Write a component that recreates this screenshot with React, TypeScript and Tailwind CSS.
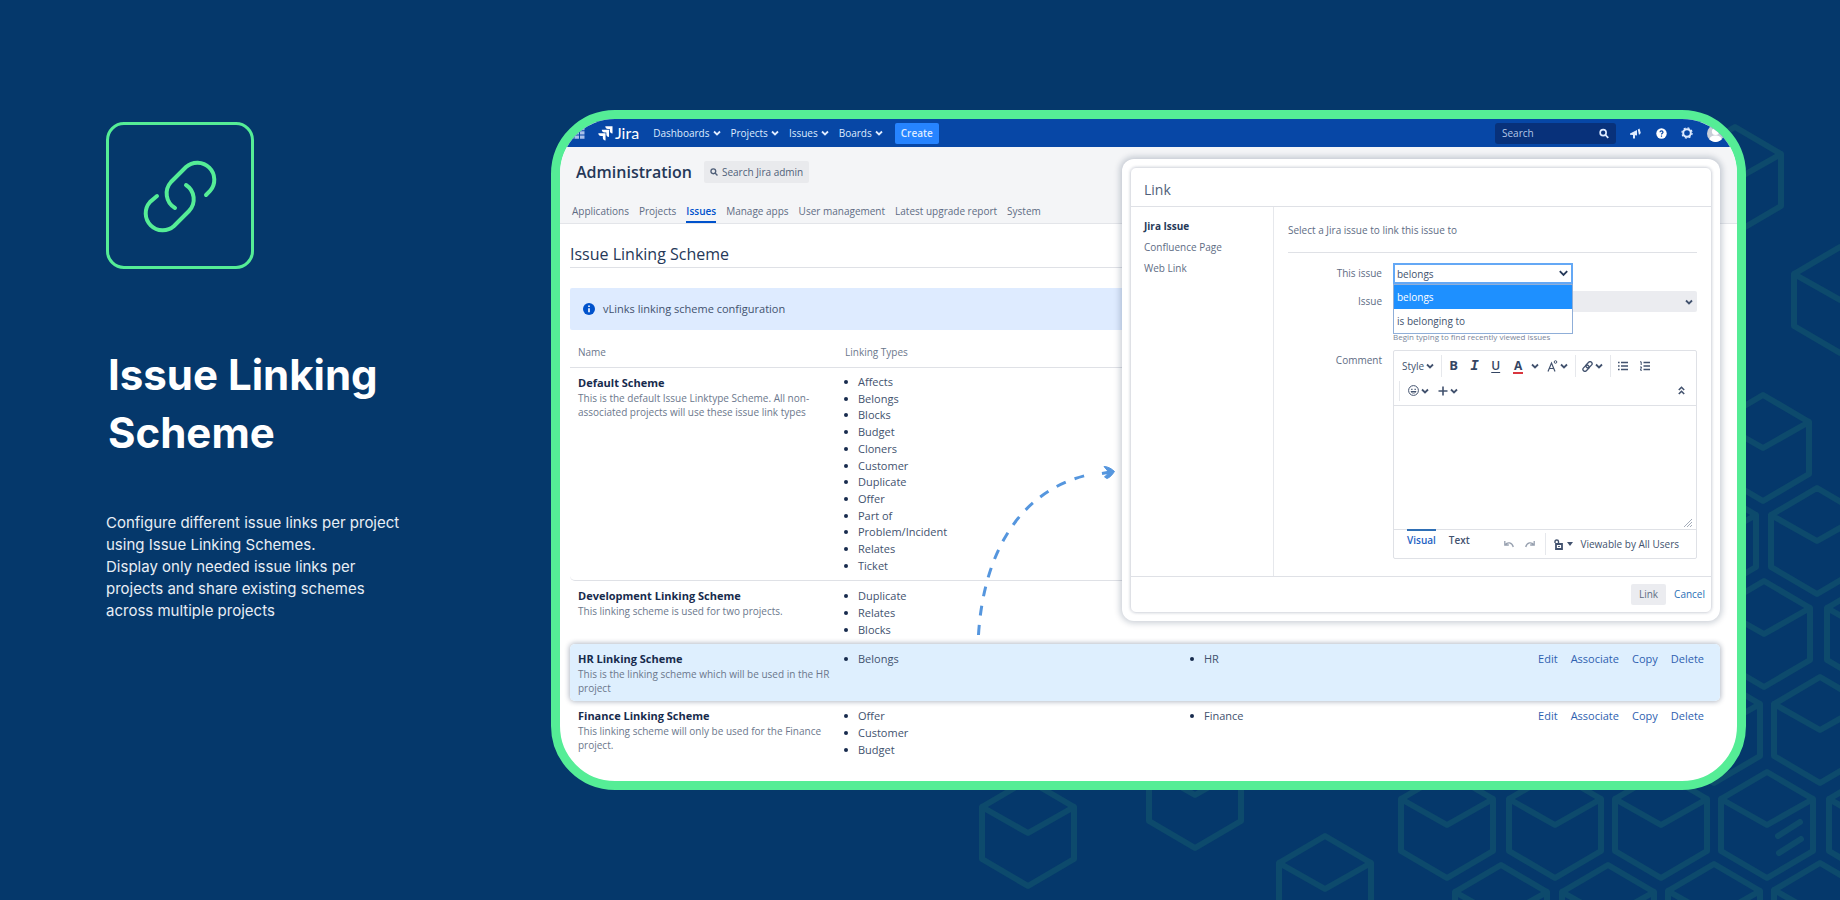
import { useState } from "react";
import type { ReactNode } from "react";

interface Scheme {
  name: string;
  description: string;
  types: string[];
  project?: string;
  highlighted?: boolean;
}

const schemes: Scheme[] = [
  {
    name: "Default Scheme",
    description: "This is the default Issue Linktype Scheme. All non-associated projects will use these issue link types",
    types: [
      "Affects",
      "Belongs",
      "Blocks",
      "Budget",
      "Cloners",
      "Customer",
      "Duplicate",
      "Offer",
      "Part of",
      "Problem/Incident",
      "Relates",
      "Ticket",
    ],
  },
  {
    name: "Development Linking Scheme",
    description: "This linking scheme is used for two projects.",
    types: ["Duplicate", "Relates", "Blocks"],
  },
  {
    name: "HR Linking Scheme",
    description: "This is the linking scheme which will be used in the HR project",
    types: ["Belongs"],
    project: "HR",
    highlighted: true,
  },
  {
    name: "Finance Linking Scheme",
    description: "This linking scheme will only be used for the Finance project.",
    types: ["Offer", "Customer", "Budget"],
    project: "Finance",
  },
];

const menus = ["Dashboards", "Projects", "Issues", "Boards"];
const tabs = ["Applications", "Projects", "Issues", "Manage apps", "User management", "Latest upgrade report", "System"];
const actions = ["Edit", "Associate", "Copy", "Delete"];

// Centres of the cubes in the backdrop
const cubes = [
  [1735, 180],
  [1840, 300],
  [1763, 448],
  [1710, 541],
  [1817, 541],
  [1764, 634],
  [1873, 634],
  [1714, 730],
  [1820, 730],
  [1028, 833],
  [1195, 795],
  [1325, 889],
  [1447, 825],
  [1555, 825],
  [1661, 825],
  [1767, 825],
  [1875, 825],
  [1501, 918],
  [1608, 918],
  [1714, 917],
  [1820, 916],
];

function Backdrop() {
  return (
    <svg
      className="absolute right-0 bottom-0"
      width="1840"
      height="900"
      viewBox="0 0 1840 900"
      fill="none"
      stroke="#0d4a6c"
      strokeWidth="6"
      strokeLinejoin="round"
      strokeLinecap="round"
      aria-hidden="true"
    >
      {cubes.map(([x, y]) => (
        <path
          key={`${x}-${y}`}
          transform={`translate(${x} ${y})`}
          d="M0-53 46-26V26L0 53-46 26V-26ZM-46-26 0 0 46-26"
        />
      ))}
      <path d="M1778 836 1800 822M1779 853 1801 839" />
    </svg>
  );
}

function Chevron({ className = "" }: { className?: string }) {
  return (
    <svg className={className} width="8" height="8" viewBox="0 0 8 8" fill="none" stroke="currentColor" strokeWidth="1.800" aria-hidden="true">
      <path d="M1 2.500 4 5.500 7 2.500" />
    </svg>
  );
}

function SearchIcon({ size }: { size: number }) {
  return (
    <svg width={size} height={size} viewBox="0 0 12 12" fill="none" stroke="currentColor" strokeWidth="2" aria-hidden="true">
      <circle cx="5" cy="5" r="3.600" />
      <path d="M7.600 7.600 11.200 11.200" />
    </svg>
  );
}

function TopBar() {
  return (
    <header className="flex h-7 items-center bg-[#0747a6] pr-[13px] pl-[9px] text-[10px] text-[#deebff]">
      <button aria-label="App switcher" className="mr-[13px] text-[#a9c0ea]">
        <svg width="16" height="12" viewBox="0 0 16 12" fill="currentColor">
          <path d="M0 0h4.500v3.200H0zM5.500 0h4.500v3.200H5.500zM11 0h4.500v3.200H11zM0 4.300h4.500v3.200H0zM5.500 4.300h4.500v3.200H5.500zM11 4.300h4.500v3.200H11zM0 8.600h4.500v3.200H0zM5.500 8.600h4.500v3.200H5.500zM11 8.600h4.500v3.200H11z" />
        </svg>
      </button>
      <a href="#" className="mr-[14px] flex items-center gap-[2px] text-white">
        <svg width="15" height="15" viewBox="-.5 0 15.500 15" fill="#fff" aria-hidden="true">
          <path d="M7 0h7.500v7.500c-1.700 0-2.800-1.200-2.800-2.800V2.800H9.800C8.200 2.800 7 1.700 7 0Z" />
          <path d="M3.400 3.600h7.500v7.500c-1.700 0-2.800-1.200-2.800-2.800V6.400H6.200C4.600 6.400 3.400 5.300 3.400 3.600Z" />
          <path d="M-.2 7.200h7.500v7.500c-1.700 0-2.800-1.200-2.800-2.800V10H2.600C1 10-.2 8.900-.2 7.200Z" />
        </svg>
        <span className="font-['Lato',sans-serif] text-[16px] leading-5">Jira</span>
      </a>
      <nav className="flex items-center gap-[10px]">
        {menus.map((menu) => (
          <button key={menu} className="flex items-center gap-[3px]">
            {menu}
            <Chevron />
          </button>
        ))}
        <button className="ml-[2px] h-[21px] rounded-[2px] bg-[#2684ff] px-[6px] font-semibold">Create</button>
      </nav>
      <div className="ml-auto flex items-center">
        <label className="mr-[14px] flex h-[21px] w-[121px] items-center rounded-[3px] bg-[#08317a] px-[7px]">
          <input
            type="search"
            aria-label="Search"
            placeholder="Search"
            className="w-full min-w-0 bg-transparent outline-none placeholder:text-[#b3c7e8]"
          />
          <SearchIcon size={11} />
        </label>
        <button aria-label="Feedback" className="mr-[15px]">
          <svg width="11" height="11" viewBox="0 0 11 11" fill="currentColor">
            <path d="M0 5.500 7 2v5.500L5 7.300V10.500H3V7L0 6.800ZM7.800 1.500 9.500.5 10.800 5 9 7Z" />
          </svg>
        </button>
        <button aria-label="Help" className="mr-[14px]">
          <svg width="11" height="11" viewBox="0 0 11 11">
            <circle cx="5.500" cy="5.500" r="5.200" fill="#fff" />
            <path d="M4 4.300C4 2.500 7 2.500 7 4.300 7 5.300 5.500 5.300 5.500 6.600M5.500 7.600v1.200" fill="none" stroke="#0747a6" strokeWidth="1.200" />
          </svg>
        </button>
        <button aria-label="Settings" className="mr-[14px]">
          <svg width="12" height="12" viewBox="0 0 12 12" fill="none" stroke="currentColor">
            <circle cx="6" cy="6" r="3.800" strokeWidth="2" />
            <circle cx="6" cy="6" r="5.100" strokeWidth="1.200" strokeDasharray="2 2" />
          </svg>
        </button>
        <button aria-label="Profile">
          <svg width="17" height="17" viewBox="0 0 17 17">
            <circle cx="8.500" cy="8.500" r="8.500" fill="#c9ced8" />
            <circle cx="8.500" cy="6.500" r="3.600" fill="#fff" />
            <path d="M2.500 14.500C2.500 9 14.500 9 14.500 14.500 11 17.800 6 17.800 2.500 14.500Z" fill="#fff" />
          </svg>
        </button>
      </div>
    </header>
  );
}

function AdminHeader() {
  return (
    <div className="border-b border-[#e3e5e9] bg-[#f4f5f7] pt-[14px] pl-3">
      <div className="flex items-center gap-3 pl-1">
        <h1 className="text-[16px] leading-[22px] font-semibold text-[#253858]">Administration</h1>
        <button className="flex h-[22px] items-center gap-1 rounded-[2px] bg-[#e9eaed] px-[6px] text-[10px] text-[#505f79]">
          <SearchIcon size={8} />
          Search Jira admin
        </button>
      </div>
      <nav className="mt-5 flex gap-[10px] text-[10px] leading-4 text-[#5e6c84]">
        {tabs.map((tab) => (
          <a
            key={tab}
            href="#"
            className={
              tab === "Issues"
                ? "border-b-2 border-[#0052cc] pb-[2px] font-semibold text-[#0052cc]"
                : "border-b-2 border-transparent pb-[2px]"
            }
          >
            {tab}
          </a>
        ))}
      </nav>
    </div>
  );
}

function Bullet({ children }: { children: ReactNode }) {
  return (
    <li className="-ml-[15px] flex items-center gap-[10px]">
      <span className="size-1 rounded-full bg-[#172b4d]" />
      {children}
    </li>
  );
}

function SchemeTable() {
  return (
    <table className="w-full table-fixed border-separate border-spacing-0 text-left text-[11px] leading-[17px] text-[#42526e]">
      <colgroup>
        <col className="w-[267px]" />
        <col className="w-[347px]" />
        <col />
        <col className="w-[260px]" />
      </colgroup>
      <thead>
        <tr className="h-[38px] text-[10px] text-[#6b778c]">
          <th className="border-b border-[#dfe1e6] pt-2 pl-2 font-normal">Name</th>
          <th className="border-b border-[#dfe1e6] pt-2 pl-2 font-normal">Linking Types</th>
          <th className="border-b border-[#dfe1e6]" aria-label="Projects" />
          <th className="border-b border-[#dfe1e6]" aria-label="Actions" />
        </tr>
      </thead>
      <tbody>
        {schemes.map((scheme, index) => {
          const line = index === 0 ? "border-b border-[#dfe1e6]" : "";
          const fill = scheme.highlighted ? "bg-[#deeffe]" : "";
          return (
            <tr
              key={scheme.name}
              className={scheme.highlighted ? "rounded-[5px] align-top shadow-[0_0_5px_1px_rgba(9,30,66,0.3)]" : "align-top"}
            >
              <td className={`rounded-l-[5px] py-[6px] pl-2 ${line} ${fill}`}>
                <h3 className="leading-[17px] font-bold text-[#172b4d]">{scheme.name}</h3>
                <p className="text-[10px] leading-[14px] text-[#6b778c]">{scheme.description}</p>
              </td>
              <td className={`py-[6px] pl-[22px] ${line} ${fill}`}>
                <ul className={index === 0 ? "flex h-[200px] flex-col justify-between leading-4" : ""}>
                  {scheme.types.map((type) => (
                    <Bullet key={type}>{type}</Bullet>
                  ))}
                </ul>
              </td>
              <td className={`py-[6px] pl-[21px] ${line} ${fill}`}>
                {scheme.project && (
                  <ul>
                    <Bullet>{scheme.project}</Bullet>
                  </ul>
                )}
              </td>
              <td className={`rounded-r-[5px] py-[6px] pr-4 ${line} ${fill}`}>
                {scheme.project && (
                  <div className="flex justify-end gap-[13px] text-[#2f5fb0]">
                    {actions.map((action) => (
                      <a key={action} href="#">
                        {action}
                      </a>
                    ))}
                  </div>
                )}
              </td>
            </tr>
          );
        })}
      </tbody>
    </table>
  );
}

function ToolButton({ label, menu, children }: { label: string; menu?: boolean; children: ReactNode }) {
  return (
    <button type="button" aria-label={label} className="flex items-center gap-[2px]">
      {children}
      {menu && <Chevron />}
    </button>
  );
}

function Editor() {
  return (
    <div className="rounded-[2px] border border-[#dfe1e6] text-[#42526e]">
      <div className="border-b border-[#dfe1e6]">
        <div className="flex h-[30px] items-center pl-2">
          <ToolButton label="Style" menu>
            Style
          </ToolButton>
          <span className="mx-[7px] h-[22px] w-px bg-[#e6e8ec]" />
          <div className="flex items-center gap-[13px] text-[#344563]">
            <button type="button" aria-label="Bold" className="w-2 text-[13px] font-bold">
              B
            </button>
            <button type="button" aria-label="Italic" className="w-2 font-['Liberation_Mono',monospace] text-[14px] font-bold italic">
              I
            </button>
            <button type="button" aria-label="Underline" className="w-[9px] text-[12px] font-semibold underline underline-offset-2">
              U
            </button>
            <button type="button" aria-label="Text colour" className="h-[15px] w-[10px] border-b-2 border-[#d9363e] text-[12px] leading-[13px] font-bold">
              A
            </button>
          </div>
          <button type="button" aria-label="More colours" className="mr-2 ml-2">
            <Chevron />
          </button>
          <ToolButton label="More formatting" menu>
            <svg width="11" height="12" viewBox="0 0 11 12" fill="none" stroke="currentColor">
              <path d="M1 11.500 4.500 3 8 11.500M2 8.500h5" strokeWidth="1.200" />
              <circle cx="8.500" cy="2" r="1.300" />
            </svg>
          </ToolButton>
          <span className="mr-[6px] ml-[7px] h-[22px] w-px bg-[#e6e8ec]" />
          <ToolButton label="Insert link" menu>
            <svg width="11" height="11" viewBox="0 0 11 11" fill="none" stroke="currentColor" strokeWidth="1.300">
              <rect x="3.500" y="1.800" width="7" height="4" rx="2" transform="rotate(-45 7 3.800)" />
              <rect x=".5" y="5.200" width="7" height="4" rx="2" transform="rotate(-45 4 7.200)" />
            </svg>
          </ToolButton>
          <span className="mx-[7px] h-[22px] w-px bg-[#e6e8ec]" />
          <div className="flex items-center gap-3">
            <ToolButton label="Bullet list">
              <svg width="10" height="10" viewBox="0 0 10 10" fill="none" stroke="currentColor" strokeWidth="1.400">
                <path d="M0 1.500h1.600M0 5h1.600M0 8.500h1.600M3 1.500h7M3 5h7M3 8.500h7" />
              </svg>
            </ToolButton>
            <ToolButton label="Numbered list">
              <svg width="10" height="10" viewBox="0 0 10 10" fill="none" stroke="currentColor" strokeWidth="1.400">
                <path d="M3.500 1.500H10M3.500 5H10M3.500 8.500H10" />
                <path d="M0 .8h1.200V4M0 6h1.600L.4 9.200H2" strokeWidth="1" />
              </svg>
            </ToolButton>
          </div>
        </div>
        <div className="flex h-6 items-center gap-[9px] pr-[11px] pb-[5px] pl-[5px]">
          <span className="-mr-px h-5 w-px bg-[#e6e8ec]" />
          <ToolButton label="Emoji" menu>
            <svg width="11" height="11" viewBox="0 0 11 11" fill="none" stroke="currentColor">
              <circle cx="5.500" cy="5.500" r="4.900" />
              <path d="M3 4.300h1.600M6.400 4.300H8M3 6.500h5C7.500 8.500 3.500 8.500 3 6.500Z" />
            </svg>
          </ToolButton>
          <ToolButton label="Insert" menu>
            <svg width="10" height="10" viewBox="0 0 10 10" fill="none" stroke="currentColor" strokeWidth="1.600">
              <path d="M5 .5v9M.5 5h9" />
            </svg>
          </ToolButton>
          <button type="button" aria-label="Collapse toolbar" className="ml-auto">
            <svg width="7" height="9" viewBox="0 0 7 9" fill="none" stroke="currentColor" strokeWidth="1.600">
              <path d="M.8 4 3.500 1.300 6.200 4M.8 8 3.500 5.300 6.200 8" />
            </svg>
          </button>
        </div>
      </div>
      <div className="relative">
        <textarea id="comment" className="block h-[123px] w-full resize-none outline-none" />
        <svg className="absolute right-1 bottom-[2px]" width="8" height="8" viewBox="0 0 8 8" stroke="#a5adba" aria-hidden="true">
          <path d="M0 8 8 0M3 8 8 3M6 8 8 6" />
        </svg>
      </div>
      <div className="flex h-[29px] border-t border-[#dfe1e6] pl-[13px]">
        <button type="button" className="-mt-px h-[21px] border-t-2 border-[#2f6fb5] font-semibold text-[#1d63c4]">
          Visual
        </button>
        <button type="button" className="ml-[13px] h-[21px] font-semibold">
          Text
        </button>
        <div className="ml-auto flex items-center pr-[17px]">
          <button type="button" aria-label="Undo" className="mr-[11px] text-[#97a0af]">
            <svg width="10" height="7" viewBox="0 0 10 7" fill="none" stroke="currentColor" strokeWidth="1.300">
              <path d="M.8 0v4h4M1 3.800C3.500.8 8 1 9.300 6" />
            </svg>
          </button>
          <button type="button" aria-label="Redo" className="mr-[10px] text-[#97a0af]">
            <svg width="10" height="7" viewBox="0 0 10 7" fill="none" stroke="currentColor" strokeWidth="1.300">
              <path d="M9.200 0v4h-4M9 3.800C6.500.8 2 1 .7 6" />
            </svg>
          </button>
          <span className="mr-2 h-[22px] w-px bg-[#e6e8ec]" />
          <button type="button" className="flex items-center">
            <svg className="mr-1" width="9" height="11" viewBox="0 0 9 11" fill="none" stroke="currentColor" aria-hidden="true">
              <path d="M1 4V2.500C1 .5 4.500.5 4.500 2.500V4" strokeWidth="1.400" />
              <path d="M2 5h6v5H2zM5 7v1" strokeWidth="1.800" />
            </svg>
            <svg className="mr-2" width="6" height="4" viewBox="0 0 6 4" fill="currentColor" aria-hidden="true">
              <path d="M0 0h6L3 4Z" />
            </svg>
            Viewable by All Users
          </button>
        </div>
      </div>
    </div>
  );
}

function LinkDialog() {
  const [relation, setRelation] = useState("belongs");
  const options = ["belongs", "is belonging to"];

  return (
    <section
      role="dialog"
      aria-labelledby="dialog-title"
      className="absolute top-10 right-[17px] w-[598px] rounded-xl bg-white p-2 text-[10px] text-[#5e6c84] shadow-[0_0_6px_2px_rgba(9,30,66,0.22)]"
    >
      <div className="rounded-[6px] border border-[#dfe1e6] shadow-[0_0_3px_rgba(9,30,66,0.2)]">
        <h2 id="dialog-title" className="border-b border-[#dfe1e6] pt-[11px] pb-[5px] pl-[13px] text-[14px] leading-[22px] text-[#505f79]">
          Link
        </h2>
        <div className="flex h-[369px]">
          <nav className="flex w-[143px] flex-col gap-[5px] border-r border-[#e6e8ec] pt-[11px] pl-[13px] leading-4">
            <a href="#" className="font-bold text-[#253858]">
              Jira Issue
            </a>
            <a href="#">Confluence Page</a>
            <a href="#">Web Link</a>
          </nav>
          <form className="flex-1 px-[14px]">
            <p className="border-b border-[#dfe1e6] pt-[15px] pb-[14px] leading-4">Select a Jira issue to link this issue to</p>
            <div className="mt-[10px] grid grid-cols-[94px_1fr] gap-x-[11px]">
              <label htmlFor="relation" className="text-right leading-[21px] font-medium">
                This issue
              </label>
              <div className="relative w-[180px]">
                <select
                  id="relation"
                  value={relation}
                  onChange={(e) => setRelation(e.target.value)}
                  className="h-[21px] w-full appearance-none border-2 border-[#64a8f5] bg-white pl-[2px] leading-4 text-[#42526e] outline-none"
                >
                  {options.map((option) => (
                    <option key={option}>{option}</option>
                  ))}
                </select>
                <svg
                  className="pointer-events-none absolute top-[7px] right-[5px]"
                  width="9"
                  height="7"
                  viewBox="0 0 9 7"
                  fill="none"
                  stroke="#253858"
                  strokeWidth="1.800"
                  aria-hidden="true"
                >
                  <path d="M.8 1.200 4.500 5 8.200 1.200" />
                </svg>
                <ul role="listbox" aria-label="Relation" className="absolute top-[21px] left-0 z-10 w-full border border-[#8faed8] bg-white text-[#42526e]">
                  {options.map((option) => (
                    <li
                      key={option}
                      role="option"
                      aria-selected={option === relation}
                      onClick={() => setRelation(option)}
                      className="pl-[3px] leading-6 aria-selected:bg-[#1e90ff] aria-selected:text-white"
                    >
                      {option}
                    </li>
                  ))}
                </ul>
              </div>
              <label htmlFor="issue" className="mt-[7px] text-right leading-[21px] font-medium">
                Issue
              </label>
              <div className="relative mt-[7px]">
                <select id="issue" className="h-[21px] w-full appearance-none rounded-[2px] bg-[#ebecf0] outline-none" />
                <Chevron className="pointer-events-none absolute top-[7px] right-1 text-[#42526e]" />
                <p className="mt-[17px] text-[8px] leading-4 text-[#7a869a]">Begin typing to find recently viewed issues</p>
              </div>
              <label htmlFor="comment" className="mt-[5px] text-right leading-[21px] font-medium">
                Comment
              </label>
              <div className="mt-[5px]">
                <Editor />
              </div>
            </div>
          </form>
        </div>
        <div className="flex items-center justify-end gap-2 border-t border-[#dfe1e6] px-[6px] py-[7px]">
          <button type="button" className="h-[21px] rounded-[2px] bg-[#ebecf0] px-2">
            Link
          </button>
          <a href="#" className="text-[#2a6fb5]">
            Cancel
          </a>
        </div>
      </div>
    </section>
  );
}

function DashedArrow() {
  return (
    <svg className="absolute top-[341px] left-[410px]" width="150" height="180" viewBox="0 0 150 180" fill="none" stroke="#5596de" strokeWidth="3" aria-hidden="true">
      <path d="M8.500 175C13 100 45 30 122 14" strokeDasharray="10 9.500" />
      <path d="M132 13.500 140 12" />
      <path d="M134 6.500C138 6.500 142 9 144.500 11.500 142 15 140 17.500 137 18.500L134.500 17 139 12.500Z" fill="#5596de" strokeWidth="1" />
    </svg>
  );
}

export default function App() {
  return (
    <main className="relative flex min-h-screen items-start overflow-hidden bg-[#05386b] pt-[110px] pr-[94px] pl-[106px] font-['Open_Sans',sans-serif]">
      <Backdrop />

      <section className="relative w-[445px] shrink-0 pt-3 text-white">
        <div className="flex h-[147px] w-[148px] items-center justify-center rounded-[18px] border-[3px] border-[#55ed96]">
          <svg width="76" height="76" viewBox="142 157 76 76" fill="none" stroke="#55ed96" strokeWidth="4" strokeLinecap="round" aria-hidden="true">
            <path d="M206 194 210 190A17 17 0 0 0 186 166L171 181A17 17 0 0 0 175 207" />
            <path d="M157 195 150 201A17 17 0 0 0 174 225L189 210A17 17 0 0 0 186 184" />
          </svg>
        </div>
        <h1 className="mt-[77px] w-[330px] pl-[2px] font-['Inter',sans-serif] text-[42px] leading-[58px] font-bold">
          Issue Linking Scheme
        </h1>
        <p className="mt-[50px] w-[330px] font-['Inter',sans-serif] text-[15px] leading-[22px] text-[#e8eef5]">
          Configure different issue links per project
          <br />
          using Issue Linking Schemes.
          <br />
          Display only needed issue links per
          <br />
          projects and share existing schemes
          <br />
          across multiple projects
        </p>
      </section>

      <section className="relative min-w-0 flex-1 overflow-hidden rounded-[64px] border-[9px] border-[#55ed96] bg-white pb-[17px]">
        <TopBar />
        <AdminHeader />
        <div className="pr-[17px] pl-[10px]">
          <h2 className="mt-[17px] border-b border-[#dfe1e6] text-[16px] leading-[26px] font-medium text-[#253858]">Issue Linking Scheme</h2>
          <div className="mt-5 flex h-[42px] items-center gap-2 rounded-[2px] bg-[#deebff] pl-[13px] text-[11px] text-[#42526e]">
            <svg width="12" height="12" viewBox="0 0 12 12" aria-hidden="true">
              <circle cx="6" cy="6" r="6" fill="#0052cc" />
              <path d="M6 5.200v4M6 2.500v1.600" stroke="#fff" strokeWidth="1.600" />
            </svg>
            vLinks linking scheme configuration
          </div>
          <SchemeTable />
        </div>
        <DashedArrow />
        <LinkDialog />
      </section>
    </main>
  );
}
